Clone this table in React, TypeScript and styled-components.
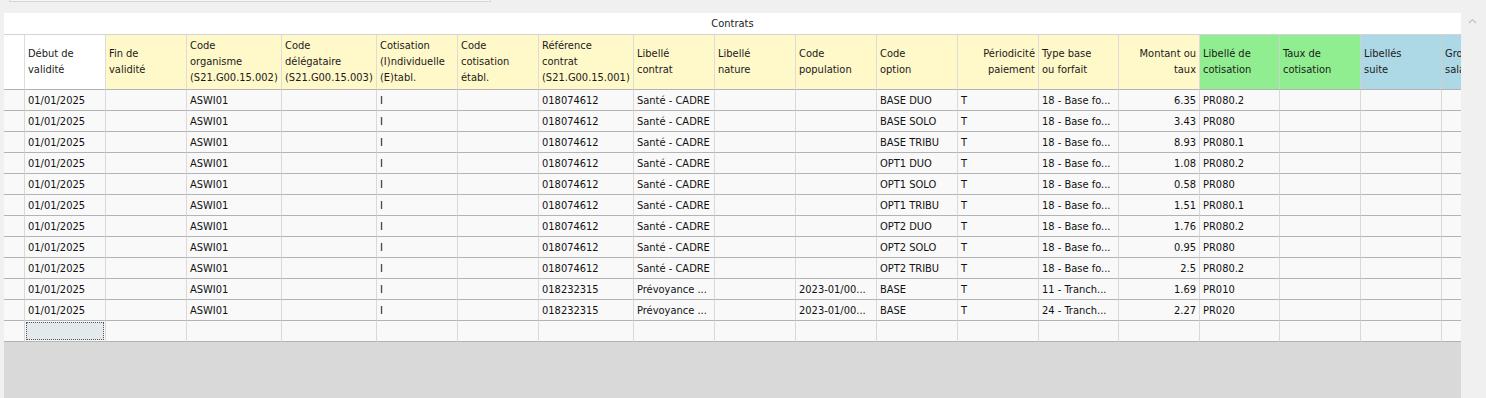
import React from 'react'
import styled, {createGlobalStyle} from 'styled-components'

const GlobalStyle = createGlobalStyle`
  html, body {
    margin: 0;
    padding: 0;
    background: #f0f0f0;
  }
  body {
    font-family: 'DejaVu Sans Condensed', 'DejaVu Sans', sans-serif;
    font-stretch: condensed;
    font-size: 11px;
    color: #111;
  }
`

type Tone = 'white' | 'yellow' | 'green' | 'blue'

type Column = {
  width: number
  label: string[]
  tone: Tone
  right?: boolean
}

const columns: Column[] = [
  {width: 81, label: ['Début de', 'validité'], tone: 'white'},
  {width: 81, label: ['Fin de', 'validité'], tone: 'yellow'},
  {width: 95, label: ['Code', 'organisme', '(S21.G00.15.002)'], tone: 'yellow'},
  {width: 95, label: ['Code', 'délégataire', '(S21.G00.15.003)'], tone: 'yellow'},
  {width: 81, label: ['Cotisation', '(I)ndividuelle', '(E)tabl.'], tone: 'yellow'},
  {width: 81, label: ['Code', 'cotisation', 'établ.'], tone: 'yellow'},
  {width: 95, label: ['Référence', 'contrat', '(S21.G00.15.001)'], tone: 'yellow'},
  {width: 81, label: ['Libellé', 'contrat'], tone: 'yellow'},
  {width: 81, label: ['Libellé', 'nature'], tone: 'yellow'},
  {width: 81, label: ['Code', 'population'], tone: 'yellow'},
  {width: 81, label: ['Code', 'option'], tone: 'yellow'},
  {width: 81, label: ['Périodicité', 'paiement'], tone: 'yellow', right: true},
  {width: 80, label: ['Type base', 'ou forfait'], tone: 'yellow'},
  {width: 81, label: ['Montant ou', 'taux'], tone: 'yellow', right: true},
  {width: 80, label: ['Libellé de', 'cotisation'], tone: 'green'},
  {width: 81, label: ['Taux de', 'cotisation'], tone: 'green'},
  {width: 81, label: ['Libellés', 'suite'], tone: 'blue'},
  {width: 81, label: ['Groupe', 'salarié'], tone: 'blue'},
]

const toneColor: Record<Tone, string> = {
  white: '#ffffff',
  yellow: '#fff8c9',
  green: '#90ee90',
  blue: '#add8e6',
}

// index of the amount column, the only data column that is right aligned
const AMOUNT = 13

const sante = (option: string, montant: string, libelle: string) => [
  '01/01/2025', '', 'ASWI01', '', 'I', '', '018074612', 'Santé - CADRE', '', '',
  option, 'T', '18 - Base fo...', montant, libelle, '', '', '',
]

const rows: string[][] = [
  sante('BASE DUO', '6.35', 'PR080.2'),
  sante('BASE SOLO', '3.43', 'PR080'),
  sante('BASE TRIBU', '8.93', 'PR080.1'),
  sante('OPT1 DUO', '1.08', 'PR080.2'),
  sante('OPT1 SOLO', '0.58', 'PR080'),
  sante('OPT1 TRIBU', '1.51', 'PR080.1'),
  sante('OPT2 DUO', '1.76', 'PR080.2'),
  sante('OPT2 SOLO', '0.95', 'PR080'),
  sante('OPT2 TRIBU', '2.5', 'PR080.2'),
  ['01/01/2025', '', 'ASWI01', '', 'I', '', '018232315', 'Prévoyance ...', '', '2023-01/00...',
    'BASE', 'T', '11 - Tranch...', '1.69', 'PR010', '', '', ''],
  ['01/01/2025', '', 'ASWI01', '', 'I', '', '018232315', 'Prévoyance ...', '', '2023-01/00...',
    'BASE', 'T', '24 - Tranch...', '2.27', 'PR020', '', '', ''],
]

const App: React.FC = () => {
  const template = ['21px', ...columns.map(c => `${c.width}px`)].join(' ')

  return (
    <Page>
      <GlobalStyle />
      <TopStrip>
        <FieldEdge />
      </TopStrip>
      <Body>
        <Panel>
          <Title>Contrats</Title>
          <Grid style={{gridTemplateColumns: template}}>
            <HeadCell $tone="white" />
            {columns.map((c, i) => (
              <HeadCell key={i} $tone={c.tone} $right={c.right}>
                {c.label.map((line, j) => (
                  <span key={j}>{line}</span>
                ))}
              </HeadCell>
            ))}

            {rows.map((row, r) => (
              <React.Fragment key={r}>
                <Cell />
                {row.map((value, i) => (
                  <Cell key={i} $right={i === AMOUNT}>
                    {value}
                  </Cell>
                ))}
              </React.Fragment>
            ))}

            {/* new row, with the focused cell */}
            <Cell />
            {columns.map((_, i) =>
              i === 0 ? (
                <FocusCell key={i}>
                  <span />
                </FocusCell>
              ) : (
                <Cell key={i} />
              ),
            )}
          </Grid>
          <Empty />
        </Panel>
        <ScrollBar>
          <svg width="9" height="6" viewBox="0 0 9 6">
            <polyline points="1,5 4.5,1.5 8,5" fill="none" stroke="#c2c2c2" strokeWidth="1.2" />
          </svg>
        </ScrollBar>
      </Body>
    </Page>
  )
}

const Page = styled.div`
  width: 1486px;
  height: 398px;
  display: flex;
  flex-direction: column;
  background: #f0f0f0;
  overflow: hidden;
`

const TopStrip = styled.div`
  height: 13px;
  flex: none;
  padding-left: 9px;
`

const FieldEdge = styled.div`
  width: 480px;
  height: 1px;
  background: #f6f6f6;
  border: 1px solid #d6d6d6;
  border-top: none;
`

const Body = styled.div`
  flex: 1;
  display: flex;
  padding-left: 4px;
  min-height: 0;
`

const Panel = styled.div`
  width: 1457px;
  flex: none;
  display: flex;
  flex-direction: column;
  background: #d9d9d9;
  overflow: hidden;
`

const Title = styled.div`
  height: 21px;
  flex: none;
  background: #ffffff;
  display: flex;
  align-items: center;
  justify-content: center;
  color: #222;
`

const Grid = styled.div`
  display: grid;
  grid-template-rows: 55px;
  grid-auto-rows: 21px;
  border-top: 1px solid #d4d4d4;
  width: max-content;
  flex: none;
`

const HeadCell = styled.div<{$tone: Tone; $right?: boolean}>`
  box-sizing: border-box;
  background: ${p => toneColor[p.$tone]};
  border-right: 1px solid ${p => (p.$tone === 'white' || p.$tone === 'yellow' ? '#dcdcdc' : '#c8d4cc')};
  border-bottom: 1px solid #b2b2b2;
  display: flex;
  flex-direction: column;
  justify-content: center;
  align-items: ${p => (p.$right ? 'flex-end' : 'flex-start')};
  padding: 0 3px 0 3px;
  line-height: 16px;
  white-space: nowrap;
  overflow: hidden;
  color: #1a1a1a;
`

const Cell = styled.div<{$right?: boolean}>`
  box-sizing: border-box;
  background: #f9f9f9;
  border-right: 1px solid #d9d9d9;
  border-bottom: 1px solid #b4b4b4;
  display: flex;
  align-items: center;
  justify-content: ${p => (p.$right ? 'flex-end' : 'flex-start')};
  padding: 0 3px 0 3px;
  white-space: nowrap;
  overflow: hidden;
  color: #111;
`

const FocusCell = styled(Cell)`
  padding: 1px 1px 1px 1px;
  align-items: stretch;

  span {
    flex: 1;
    background: #e4e9eb;
    border: 1px dotted #555;
  }
`

const Empty = styled.div`
  flex: 1;
  background: #d9d9d9;
`

const ScrollBar = styled.div`
  flex: 1;
  background: #f0f0f0;
  display: flex;
  justify-content: center;
  align-items: flex-start;
  padding-top: 5px;
  padding-right: 3px;
`

export default App
